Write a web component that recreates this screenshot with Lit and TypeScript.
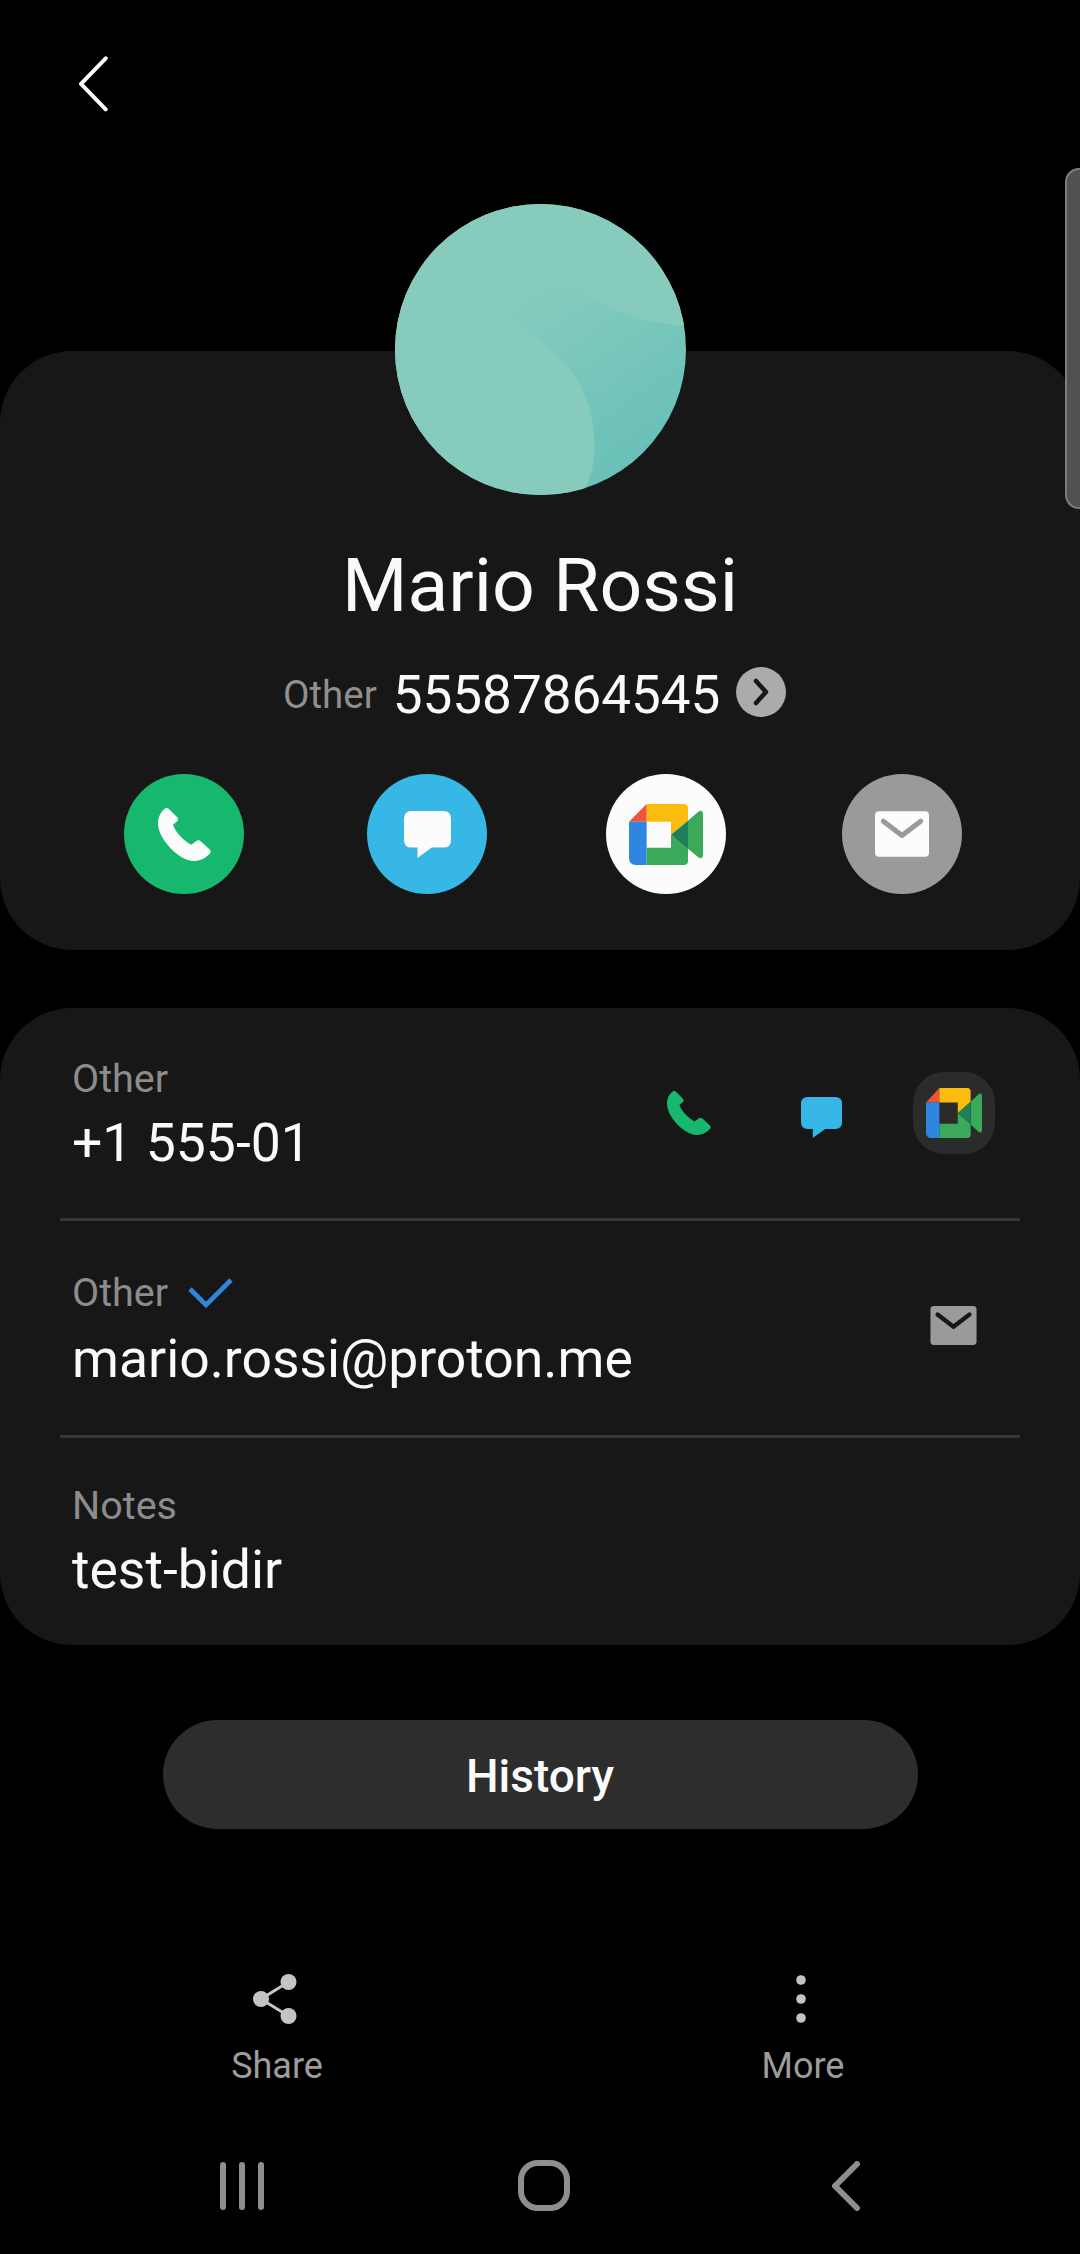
import { LitElement, html, css } from "lit";
import { customElement } from "lit/decorators.js";

const meet = (w: number, h: number) => html`<svg class="meet" width=${w} height=${h} viewBox="84 130 222 183" preserveAspectRatio="none">
  <path d="M84 183 137 130V183Z" fill="#ee5239"/>
  <path d="M137 130H248Q261 130 261 143V180L210 222V183H137Z" fill="#fbbc0d"/>
  <path d="M84 183H137V313H105Q84 313 84 292Z" fill="#2f86e0"/>
  <path d="M137 261H210V222L261 262V300Q261 313 248 313H137Z" fill="#3aa95a"/>
  <path d="M261 180 290 155Q306 143 306 163V280Q306 300 290 288L261 264Z" fill="#3aa95a"/>
  <path d="M210 222 261 180V264Z" fill="#1f7f5a"/>
</svg>`;

const phonePath = "M18 1C22-1 26 1 29 4L48 23C52 27 51 31 48 34L38 42C44 62 64 82 84 93L96 84C100 81 105 81 108 84L130 104C134 108 134 112 131 115C120 128 105 134 90 134C55 134 0 80 0 38 0 22 8 8 18 1Z";
const bubblePath = "M20 0H102Q122 0 122 20V75Q122 95 102 95H72L35 122V95H20Q0 95 0 75V20Q0 0 20 0Z";

const phone = (s: number, fill: string) => html`<svg width=${s} height=${s} viewBox="0 0 134 134"><path d=${phonePath} fill=${fill}/></svg>`;
const bubble = (w: number, h: number, fill: string) => html`<svg width=${w} height=${h} viewBox="0 0 122 122"><path d=${bubblePath} fill=${fill}/></svg>`;
const mail = (w: number, h: number, fill: string, stroke: string) => html`<svg width=${w} height=${h} viewBox="0 0 162 137"><rect width="162" height="137" rx="12" fill=${fill}/><path d="M25 30 81 73 137 30" fill="none" stroke=${stroke} stroke-width="15" stroke-linecap="round" stroke-linejoin="round"/></svg>`;

@customElement("app-root")
export class AppRoot extends LitElement {
  static styles = css`
    :host { display: block; }
    * { box-sizing: border-box; }
    .page { position: relative; width: 1080px; height: 2254px; background: #000; overflow: hidden; display: flex; flex-direction: column; font-family: Roboto, "Liberation Sans", sans-serif; color: #fafafa; }
    .top { height: 204px; padding: 56px 0 0 78px; }
    .top svg { display: block; }
    .avatar { display: block; width: 291px; height: 291px; margin: 0 auto -144px; border-radius: 50%; position: relative; z-index: 1; flex: none; }
    .card { background: #171717; flex: none; }
    .hero { height: 599px; border-radius: 72px; padding-top: 194px; display: flex; flex-direction: column; }
    .name { font-size: 75px; line-height: 80px; text-align: center; }
    .number { display: flex; align-items: center; height: 50px; margin-top: 42px; padding-left: 283px; }
    .number .lab { font-size: 38.5px; color: #8f8f8f; line-height: 50px; margin-top: 6px; }
    .number .num { font-size: 53px; line-height: 50px; margin-left: 16px; margin-top: 6px; }
    .chev { width: 50px; height: 50px; border-radius: 50%; background: #ababab; margin-left: 16px; display: flex; align-items: center; justify-content: center; }
    .acts { display: grid; grid-template-columns: 243px 239px 236px 120px; margin-top: 57px; padding-left: 124px; }
    .act { width: 120px; height: 120px; border-radius: 50%; display: flex; align-items: center; justify-content: center; }
    .green { background: #16b86e; }
    .blue { background: #37b7e5; }
    .white { background: #fcfcfc; }
    .gray { background: #9a9a9a; }
    .info { margin-top: 58px; height: 637px; border-radius: 72px; display: flex; flex-direction: column; }
    .row { display: flex; align-items: center; padding-left: 72px; flex: none; }
    .r1 { height: 210px; }
    .r2 { height: 214px; }
    .r3 { height: 207px; padding-bottom: 3px; }
    .texts { display: flex; flex-direction: column; }
    .lab2 { font-size: 39.5px; line-height: 50px; color: #8c8c8c; display: flex; align-items: center; gap: 20px; }
    .val { font-size: 53.5px; line-height: 60px; }
    .r1 .val { margin-top: 9px; }
    .r2 .val { margin-top: 11px; }
    .r3 .val { margin-top: 9px; }
    .div { height: 3px; margin: 0 60px; background: #373737; flex: none; }
    .right { margin-left: auto; display: flex; align-items: center; }
    .r1 .right { padding-right: 85px; }
    .call2 { margin-right: 90px; display: flex; }
    .bub2 { margin-right: 71px; display: flex; margin-top: 8px; }
    .squircle { width: 82px; height: 82px; border-radius: 38%; background: #2b2b2b; display: flex; align-items: center; justify-content: center; }
    .r2 .right { padding-right: 103px; margin-top: -6px; }
    .right svg, .act svg, .chev svg { display: block; }
    .history { margin: 75px auto 0; width: 755px; height: 109px; border-radius: 55px; background: #2d2d2d; display: flex; align-items: center; justify-content: center; font-size: 46px; font-weight: 500; padding-top: 2px; flex: none; }
    .bottom { display: flex; padding: 0 14px; margin-top: 145px; }
    .tool { flex: 1; display: flex; flex-direction: column; align-items: center; color: #9c9c9c; font-size: 36px; line-height: 44px; }
    .tool svg { display: block; margin: 0 4px 20px 0; }
    .nav { display: grid; grid-template-columns: repeat(3, 302px); padding-left: 91px; margin-top: 72px; justify-items: center; align-items: center; }
    .nav svg { display: block; }
    .scroll { position: absolute; left: 1065px; top: 168px; width: 30px; height: 341px; border-radius: 14px; background: #505252; border: 2px solid #7c7c7c; z-index: 2; }
  `;

  render() {
    return html`<div class="page">
      <div class="top">
        <svg width="30" height="56" viewBox="0 0 30 56"><path d="M27.7 2.3 3 27.8 27.7 53.3" fill="none" stroke="#fafafa" stroke-width="4" stroke-linecap="round" stroke-linejoin="round"/></svg>
      </div>
      <svg class="avatar" viewBox="42 42 872 872">
        <defs>
          <linearGradient id="g" gradientUnits="userSpaceOnUse" x1="420" y1="300" x2="800" y2="840">
            <stop offset="0" stop-color="#87cbbd"/>
            <stop offset="0.25" stop-color="#7fc9bc"/>
            <stop offset="1" stop-color="#68bfb8"/>
          </linearGradient>
        </defs>
        <rect x="0" y="0" width="960" height="960" fill="url(#g)"/>
        <path d="M0 0H960V412C800 405 670 360 600 300L340 260 360 365C440 440 640 510 640 770 640 815 630 855 612 895L600 960H0Z" fill="#87cbbd"/>
      </svg>
      <section class="card hero">
        <div class="name">Mario Rossi</div>
        <div class="number">
          <span class="lab">Other</span><span class="num">55587864545</span>
          <span class="chev"><svg width="18" height="28" viewBox="0 0 18 28"><path d="M4 3 14 14 4 25" fill="none" stroke="#171717" stroke-width="4.5" stroke-linecap="round" stroke-linejoin="round"/></svg></span>
        </div>
        <div class="acts">
          <div class="act green">${phone(53, "#fcfcfc")}</div>
          <div class="act blue">${bubble(47, 47, "#fcfcfc")}</div>
          <div class="act white">${meet(74, 61)}</div>
          <div class="act gray">${mail(54, 46, "#fcfcfc", "#9a9a9a")}</div>
        </div>
      </section>
      <section class="card info">
        <div class="row r1">
          <div class="texts"><div class="lab2">Other</div><div class="val">+1 555-01</div></div>
          <div class="right">
            <span class="call2">${phone(44, "#16b86e")}</span>
            <span class="bub2">${bubble(41, 41, "#37b7e5")}</span>
            <span class="squircle">${meet(56, 50)}</span>
          </div>
        </div>
        <div class="div"></div>
        <div class="row r2">
          <div class="texts">
            <div class="lab2">Other<svg width="46" height="30" viewBox="0 0 46 30"><path d="M2 11 18 27 43 2" fill="none" stroke="#2e86de" stroke-width="4.6"/></svg></div>
            <div class="val">mario.rossi@proton.me</div>
          </div>
          <div class="right">${mail(47, 39, "#9a9a9a", "#171717")}</div>
        </div>
        <div class="div"></div>
        <div class="row r3">
          <div class="texts"><div class="lab2">Notes</div><div class="val">test-bidir</div></div>
        </div>
      </section>
      <div class="history">History</div>
      <div class="bottom">
        <div class="tool">
          <svg width="44" height="50" viewBox="0 0 44 50"><g fill="#c4c4c4"><circle cx="35.5" cy="8" r="8"/><circle cx="8" cy="25" r="8"/><circle cx="35.5" cy="42" r="8"/></g><path d="M35.5 8 8 25 35.5 42" fill="none" stroke="#c4c4c4" stroke-width="3"/></svg>
          <span>Share</span>
        </div>
        <div class="tool">
          <svg width="44" height="50" viewBox="0 0 44 50"><g fill="#c4c4c4"><circle cx="22" cy="6" r="4.8"/><circle cx="22" cy="25" r="4.8"/><circle cx="22" cy="44" r="4.8"/></g></svg>
          <span>More</span>
        </div>
      </div>
      <div class="nav">
        <svg width="46" height="50" viewBox="0 0 46 50"><g stroke="#8e8e8e" stroke-width="6" stroke-linecap="round"><path d="M4 4V46M23 4V46M42 4V46"/></g></svg>
        <svg width="52" height="51" viewBox="0 0 52 51"><rect x="3" y="3" width="46" height="45" rx="17" fill="none" stroke="#8e8e8e" stroke-width="6"/></svg>
        <svg width="30" height="50" viewBox="0 0 30 50"><path d="M26 3 4 25 26 47" fill="none" stroke="#8e8e8e" stroke-width="6" stroke-linecap="round" stroke-linejoin="round"/></svg>
      </div>
      <div class="scroll"></div>
    </div>`;
  }
}
